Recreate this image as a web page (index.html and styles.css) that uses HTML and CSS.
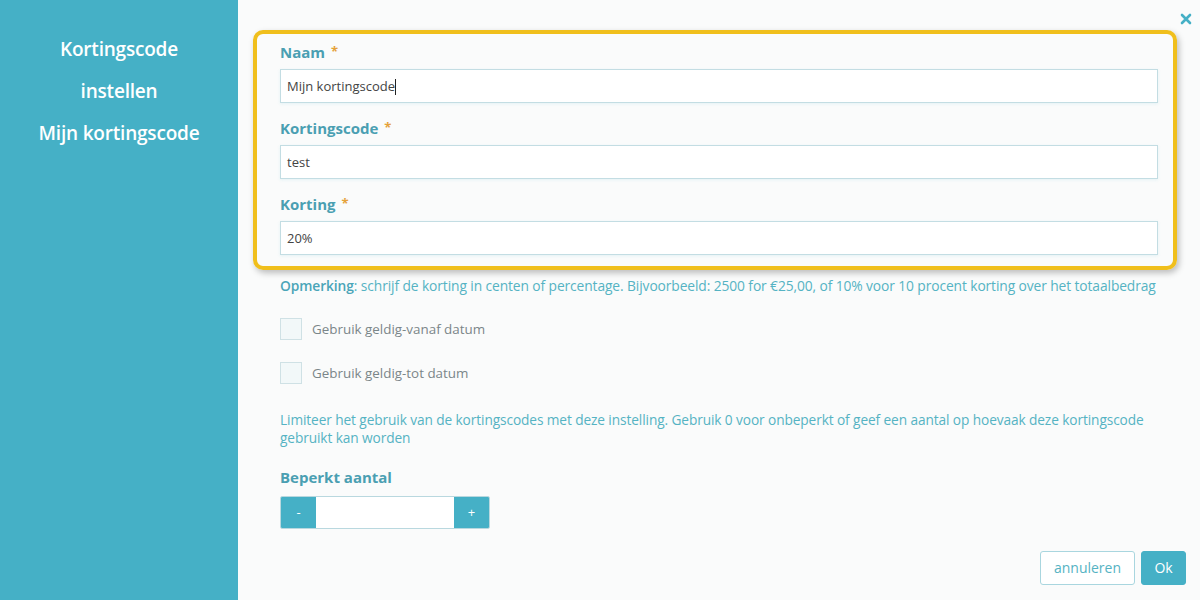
FILE: index.html
```html
<!DOCTYPE html>
<html lang="nl">
<head>
	<meta charset="UTF-8">
	<title>Kortingscode instellen</title>
	<link rel="stylesheet" href="styles.css">
</head>
<body>
	<div class="wrp">
		<div class="side">
			<p>Kortingscode</p>
			<p>instellen</p>
			<p>Mijn kortingscode</p>
		</div>
		<div class="main">
			<a class="close" href="#">
				<svg width="12" height="12" viewBox="0 0 12 12"><path d="M2 2L10 10M10 2L2 10" stroke="#45b0c6" stroke-width="2.6" stroke-linecap="round"/></svg>
			</a>
			<div class="hl">
				<div class="fld">
					<label>Naam <span class="req">*</span></label>
					<div class="inp">Mijn kortingscode<span class="caret"></span></div>
				</div>
				<div class="fld">
					<label>Kortingscode <span class="req">*</span></label>
					<div class="inp">test</div>
				</div>
				<div class="fld">
					<label>Korting <span class="req">*</span></label>
					<div class="inp">20%</div>
				</div>
			</div>
			<div class="body">
				<p class="note"><b>Opmerking</b>: schrijf de korting in centen of percentage. Bijvoorbeeld: 2500 for €25,00, of 10% voor 10 procent korting over het totaalbedrag</p>
				<div class="chk"><span class="box"></span>Gebruik geldig-vanaf datum</div>
				<div class="chk"><span class="box"></span>Gebruik geldig-tot datum</div>
				<p class="note lim">Limiteer het gebruik van de kortingscodes met deze instelling. Gebruik 0 voor onbeperkt of geef een aantal op hoevaak deze kortingscode gebruikt kan worden</p>
				<label class="lbl2">Beperkt aantal</label>
				<div class="step">
					<span class="sb">-</span>
					<span class="sv"></span>
					<span class="sb">+</span>
				</div>
			</div>
			<div class="foot">
				<span class="btn cancel">annuleren</span>
				<span class="btn ok">Ok</span>
			</div>
		</div>
	</div>
</body>
</html>
```

FILE: styles.css
```css
html,body{
	width: 100%;
	height: 100%;
	padding: 0px;
	margin: 0px;
}
body{
	font-family: "Open Sans", "Liberation Sans", sans-serif;
	background: #fafbfb;
}
.wrp{
	display: flex;
	height: 600px;
	overflow: hidden;
}
.side{
	width: 238px;
	flex: none;
	background: #45b0c6;
	color: #fff;
	text-align: center;
	padding-top: 28px;
	box-sizing: border-box;
}
.side p{
	margin: 0;
	font-size: 19px;
	font-weight: 600;
	line-height: 42px;
	letter-spacing: -0.2px;
}
.main{
	flex: 1;
	position: relative;
	padding: 30px 23px 0 15px;
	display: flex;
	flex-direction: column;
}
.close{
	position: absolute;
	top: 8px;
	right: 8px;
}
.hl{
	width: 924px;
	box-sizing: border-box;
	border: 4px solid #f0bf1c;
	border-radius: 10px;
	box-shadow: 2px 3px 6px rgba(0,0,0,0.25);
	padding: 8px 15px 11px 23px;
}
.fld label{
	display: block;
	font-size: 15px;
	font-weight: 700;
	color: #4a9fb2;
	line-height: 20px;
	margin-bottom: 6px;
}
.fld + .fld{ margin-top: 15px; }
.req{
	color: #e5a23a;
	font-size: 13px;
	margin-left: 2px;
	position: relative;
	top: -2px;
}
.inp{
	height: 34px;
	box-sizing: border-box;
	border: 1px solid #c3dde3;
	background: #fff;
	font-size: 13px;
	color: #444;
	padding: 0 6px;
	line-height: 32px;
	box-shadow: 0 1px 3px rgba(69,176,198,0.12);
}
.caret{
	display: inline-block;
	width: 1px;
	height: 16px;
	background: #222;
	vertical-align: middle;
	margin-top: -2px;
}
.body{
	padding-left: 27px;
}
.note{
	margin: 0;
	color: #55b3c3;
	font-size: 13.8px;
	line-height: 18px;
	letter-spacing: -0.1px;
}
.body > .note:first-child{ margin-top: 7px; }
.note b{ font-weight: 600; color: #4aa5b8; }
.chk{
	display: flex;
	align-items: center;
	font-size: 13.4px;
	color: #7a8689;
	margin-top: 23px;
}
.chk + .chk{ margin-top: 22px; }
.box{
	width: 20px;
	height: 20px;
	border: 1px solid #cfe1e5;
	background: #f2f8f9;
	margin-right: 10px;
}
.note.lim{
	margin-top: 27px;
	font-size: 13.7px;
}
.lbl2{
	display: block;
	font-size: 15px;
	font-weight: 700;
	color: #4a9fb2;
	margin-top: 20px;
	line-height: 20px;
}
.step{
	display: flex;
	width: 210px;
	height: 33px;
	margin-top: 9px;
	border: 1px solid #b9d8df;
	border-radius: 2px;
	box-sizing: border-box;
	overflow: hidden;
}
.sb{
	width: 35px;
	background: #45b0c6;
	color: #fff;
	font-size: 13px;
	text-align: center;
	line-height: 31px;
}
.sv{
	flex: 1;
	background: #fff;
}
.foot{
	margin-top: auto;
	margin-bottom: 15px;
	margin-right: -9px;
	display: flex;
	justify-content: flex-end;
	gap: 6px;
}
.btn{
	height: 34px;
	line-height: 32px;
	box-sizing: border-box;
	font-size: 14px;
	border-radius: 3px;
	padding: 0 14px;
}
.cancel{
	border: 1px solid #a9d6df;
	color: #55b3c3;
	background: #fff;
	width: 95px;
	text-align: center;
	padding: 0;
}
.ok{
	background: #45b0c6;
	color: #fff;
	border: 1px solid #45b0c6;
	width: 45px;
	text-align: center;
	padding: 0;
}
```
